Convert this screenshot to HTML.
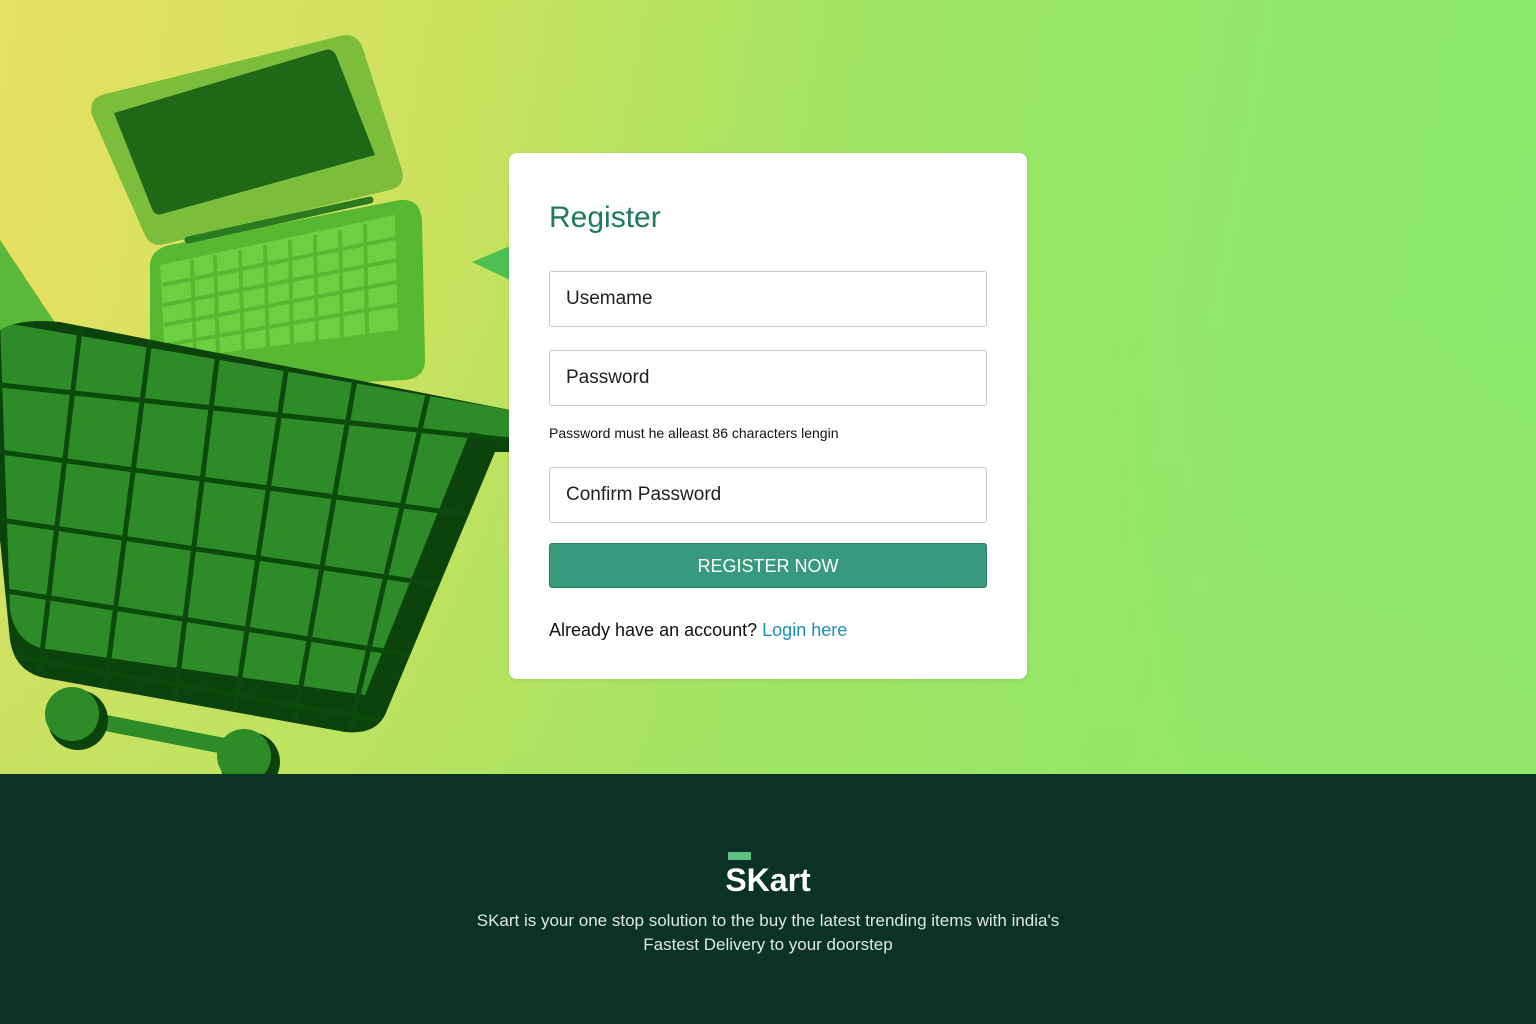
<!DOCTYPE html>
<html><head><meta charset="utf-8"><style>
*{margin:0;padding:0;box-sizing:border-box}
body{width:1536px;height:1024px;overflow:hidden;font-family:"Liberation Sans",sans-serif;position:relative}
.bg{position:absolute;left:0;top:0;width:1536px;height:774px;background:linear-gradient(100deg,#e8e062 0%,#c8e25e 30%,#a4e462 50%,#8ee86c 80%,#8ae86e 100%)}
.bg2{position:absolute;left:0;top:0;width:1536px;height:774px;background:linear-gradient(180deg,rgba(255,255,255,0) 40%,rgba(160,226,100,0.35) 100%)}
svg.ill{position:absolute;left:0;top:0}
.card{position:absolute;left:509px;top:153px;width:518px;height:526px;background:#fff;border-radius:8px;box-shadow:0 1px 4px rgba(0,0,0,0.08)}
h1{position:absolute;left:40px;top:48px;font-size:30px;font-weight:normal;color:#1e7a5e}
.inp{position:absolute;left:40px;width:438px;height:56px;border:1px solid #c8c8c8;border-radius:3px;font-size:19px;color:#222;padding-left:16px;line-height:54px}
.hint{position:absolute;left:40px;top:272px;font-size:14px;color:#111}
.btn{position:absolute;left:40px;top:390px;width:438px;height:45px;background:#379a7c;border:1px solid #2a7e64;border-radius:3px;color:#fff;font-size:18px;text-align:center;line-height:44px}
.al{position:absolute;left:40px;top:467px;font-size:18px;color:#111}
.al span{color:#1a8fc0}
.foot{position:absolute;left:0;top:774px;width:1536px;height:250px;background:#0b3226;text-align:center;color:#e6efe9}
.logo{position:absolute;left:728px;top:78px;width:23px;height:8px;background:#5fc080;border-radius:1px}
.brand{position:absolute;left:0;width:100%;top:88px;font-size:32px;font-weight:bold;color:#fff}
.desc{position:absolute;left:0;width:100%;top:135px;font-size:17px;line-height:24px;color:#dfe8e2}
</style></head><body>
<div class="bg"></div><div class="bg2"></div>
<svg class="ill" width="520" height="774" viewBox="0 0 520 774">
<polygon points="0,240 40,300 60,330 0,340" fill="#5cb83a"/>
<polygon points="472,262 510,246 510,280" fill="#4cc050"/>
<path d="M150,270 Q148,250 170,245 L400,200 Q420,198 422,220 L425,360 Q425,378 405,380 L170,392 Q150,392 150,372 Z" fill="#58b832"/>
<path d="M160,265 L395,215 L398,330 L165,360 Z" fill="#6cd040"/>
<g stroke="#58b832" stroke-width="4">
<line x1="162" y1="285" x2="397" y2="238"/><line x1="163" y1="305" x2="397" y2="260"/><line x1="164" y1="325" x2="397" y2="282"/><line x1="165" y1="345" x2="397" y2="305"/>
<line x1="192" y1="260" x2="195" y2="358"/><line x1="215" y1="255" x2="218" y2="355"/><line x1="240" y1="250" x2="243" y2="352"/><line x1="265" y1="245" x2="268" y2="348"/><line x1="290" y1="240" x2="292" y2="345"/><line x1="315" y1="235" x2="317" y2="342"/><line x1="340" y1="230" x2="342" y2="338"/><line x1="365" y1="224" x2="367" y2="334"/>
</g>
<path d="M92,115 Q88,98 105,94 L340,36 Q355,32 362,46 L402,170 Q406,186 390,190 L165,244 Q150,248 144,233 Z" fill="#7cbe3c"/>
<path d="M114,113 L325,50 Q332,48 336,55 L375,155 L162,214 Q155,216 152,209 Z" fill="#1f6818"/>
<line x1="188" y1="240" x2="370" y2="200" stroke="#2a7a20" stroke-width="7" stroke-linecap="round"/>
<defs><clipPath id="c"><path d="M0,330 Q20,318 60,322 L510,410 L510,452 L495,452 L385,715 Q375,735 345,732 L45,678 Q15,672 10,640 L0,540 Z"/></clipPath></defs>
<path d="M0,330 Q20,318 60,322 L510,410 L510,452 L495,452 L385,715 Q375,735 345,732 L45,678 Q15,672 10,640 L0,540 Z" fill="#0c420c"/>
<g clip-path="url(#c)">
<path d="M0,322 L510,410 L510,440 L470,432 L365,695 L40,648 Q15,640 10,610 Z" fill="#2e8c28"/>
<g stroke="#0c4a0c" stroke-width="5" fill="none">
<line x1="0" y1="385" x2="510" y2="440"/><line x1="0" y1="452" x2="470" y2="515"/><line x1="0" y1="520" x2="440" y2="585"/><line x1="0" y1="590" x2="410" y2="655"/><line x1="5" y1="655" x2="380" y2="720"/>
<line x1="80" y1="330" x2="40" y2="670"/><line x1="150" y1="340" x2="105" y2="690"/><line x1="218" y1="352" x2="175" y2="700"/><line x1="287" y1="365" x2="235" y2="710"/><line x1="355" y1="380" x2="295" y2="720"/><line x1="428" y1="395" x2="350" y2="730"/>
</g></g>
<line x1="80" y1="718" x2="245" y2="750" stroke="#2e8c28" stroke-width="16"/>
<circle cx="78" cy="720" r="30" fill="#0c420c"/><circle cx="72" cy="714" r="27" fill="#2e8c28"/>
<circle cx="250" cy="762" r="30" fill="#0c420c"/><circle cx="244" cy="756" r="27" fill="#2e8c28"/>
</svg>
<div class="card">
<h1>Register</h1>
<div class="inp" style="top:118px">Usemame</div>
<div class="inp" style="top:197px">Password</div>
<div class="hint">Password must he alleast 86 characters lengin</div>
<div class="inp" style="top:314px">Confirm Password</div>
<div class="btn">REGISTER NOW</div>
<div class="al">Already have an account? <span>Login here</span></div>
</div>
<div class="foot">
<div class="logo"></div>
<div class="brand">SKart</div>
<div class="desc">SKart is your one stop solution to the buy the latest trending items with india's<br>Fastest Delivery to your doorstep</div>
</div>
</body></html>
